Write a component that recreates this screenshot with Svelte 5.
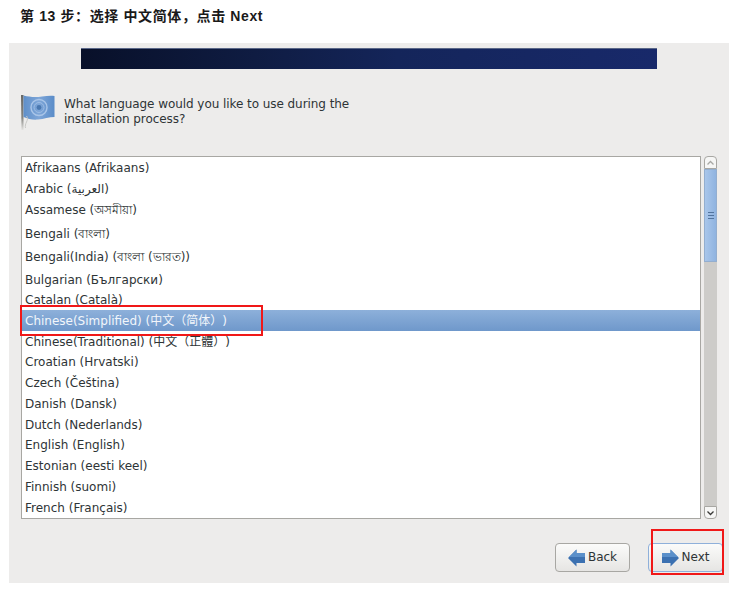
<script lang="ts">
	const languages = [
		{ label: 'Afrikaans (Afrikaans)', height: 21 },
		{ label: 'Arabic (العربية)', height: 21 },
		{ label: 'Assamese (অসমীয়া)', height: 21 },
		{ label: 'Bengali (বাংলা)', height: 26, low: true },
		{ label: 'Bengali(India) (বাংলা (ভারত))', height: 22 },
		{ label: 'Bulgarian (Български)', height: 22, low: true },
		{ label: 'Catalan (Català)', height: 20 },
		{ label: 'Chinese(Simplified) (中文（简体）)', height: 21, selected: true },
		{ label: 'Chinese(Traditional) (中文（正體）)', height: 21 },
		{ label: 'Croatian (Hrvatski)', height: 20 },
		{ label: 'Czech (Čeština)', height: 21 },
		{ label: 'Danish (Dansk)', height: 21 },
		{ label: 'Dutch (Nederlands)', height: 21 },
		{ label: 'English (English)', height: 20 },
		{ label: 'Estonian (eesti keel)', height: 21 },
		{ label: 'Finnish (suomi)', height: 21 },
		{ label: 'French (Français)', height: 21 }
	];
</script>

<div class="page">
	<h1 class="step">第 13 步：选择 中文简体，点击 Next</h1>

	<div class="window">
		<div class="banner"></div>

		<div class="question">
			<svg class="flag" width="36" height="36" viewBox="0 0 36 36" aria-hidden="true">
				<defs>
					<linearGradient id="cloth" x1="0" y1="0" x2="1" y2="0">
						<stop offset="0" stop-color="#5f8fc9" />
						<stop offset="0.5" stop-color="#7ea6d8" />
						<stop offset="1" stop-color="#5a8cc8" />
					</linearGradient>
					<linearGradient id="pole" x1="0" y1="0" x2="0" y2="1">
						<stop offset="0" stop-color="#686865" />
						<stop offset="0.65" stop-color="#858581" />
						<stop offset="1" stop-color="#e4e3e1" />
					</linearGradient>
				</defs>
				<path d="M1 0 L3.500 0 L3.500 35 L1.500 35 Z" fill="url(#pole)" />
				<path d="M3.500 0.500 C10 2 15 2.500 22 1.500 C27 0.800 31 0.500 34.500 1 L34.500 22 C29 22 24 24 18 24.500 C13 25 8 24 3.500 22 Z" fill="url(#cloth)" />
				<circle cx="19" cy="12.500" r="8" fill="none" stroke="#a9c5e8" stroke-width="1.400" />
				<circle cx="19" cy="12.500" r="5" fill="none" stroke="#9dbde4" stroke-width="1" />
				<circle cx="19" cy="12.500" r="2.400" fill="#4a78b0" />
				<path d="M6.500 21 C8 23 7.500 25 6.500 27 C5.500 29 5 31 5.500 33" fill="none" stroke="#c9c9c6" stroke-width="1" />
			</svg>
			<p>What language would you like to use during the<br />installation process?</p>
		</div>

		<div class="chooser">
			<ul class="list">
				{#each languages as lang}
					<li class="row" class:selected={lang.selected} class:low={lang.low} style:height="{lang.height}px">{lang.label}</li>
				{/each}
			</ul>

			<div class="scrollbar">
				<div class="arrow up">
					<svg width="9" height="6" viewBox="0 0 9 6" aria-hidden="true"><path d="M1.500 4.500 L4.500 1.500 L7.500 4.500" fill="none" stroke="#a8a8a4" stroke-width="1.300" /></svg>
				</div>
				<div class="thumb">
					<span></span><span></span><span></span>
				</div>
				<div class="track"></div>
				<div class="arrow down">
					<svg width="9" height="6" viewBox="0 0 9 6" aria-hidden="true"><path d="M1.500 1.500 L4.500 4.500 L7.500 1.500" fill="none" stroke="#3a3a38" stroke-width="1.300" /></svg>
				</div>
			</div>
		</div>

		<div class="actions">
			<button type="button" class="btn">
				<svg width="17" height="18" viewBox="0 0 17 18" aria-hidden="true">
					<path d="M0 9 L8.500 0.500 L8.500 4 L17 4 L17 14 L8.500 14 L8.500 17.500 Z" fill="#3c71b1" />
					<path d="M8.500 0.500 L8.500 4 L17 4 L17 8 L1 8 Z" fill="#5b90ca" />
				</svg>
				<span class="label">Back</span>
			</button>
			<button type="button" class="btn focused">
				<svg width="17" height="18" viewBox="0 0 17 18" aria-hidden="true">
					<path d="M17 9 L8.500 0.500 L8.500 4 L0 4 L0 14 L8.500 14 L8.500 17.500 Z" fill="#3c71b1" />
					<path d="M8.500 0.500 L8.500 4 L0 4 L0 8 L16 8 Z" fill="#5b90ca" />
				</svg>
				<span class="label">Next</span>
			</button>
		</div>
	</div>

	<div class="mark mark-row"></div>
	<div class="mark mark-next"></div>
</div>

<style>
	:global(body) {
		margin: 0;
		background: #fff;
	}

	.page {
		position: relative;
		width: 751px;
		height: 596px;
		overflow: hidden;
		font-family: 'DejaVu Sans', 'Noto Sans', 'Noto Sans CJK SC', sans-serif;
		font-size: 12px;
		color: #2e3436;
		text-spacing-trim: space-all;
	}

	.step {
		margin: 0;
		padding: 8px 0 0 20px;
		height: 43px;
		box-sizing: border-box;
		font-family: 'Liberation Sans', 'Noto Sans CJK SC', sans-serif;
		font-size: 14px;
		line-height: 17px;
		font-weight: 700;
		letter-spacing: 0.62px;
		color: #1a1a1a;
	}

	.window {
		margin-left: 9px;
		width: 720px;
		height: 540px;
		background: #edeceb;
		display: flex;
		flex-direction: column;
	}

	.banner {
		margin: 5px 0 0 72px;
		width: 576px;
		height: 21px;
		background: linear-gradient(90deg, #081029 0%, #0f1c42 30%, #14255a 55%, #18296a 100%);
		border-top: 1px solid #5a6788;
		box-sizing: border-box;
	}

	.question {
		margin: 26px 0 0 11px;
		height: 38px;
		display: flex;
		align-items: flex-start;
		gap: 8px;
	}

	.flag {
		flex: none;
	}

	.question p {
		margin: 2px 0 0;
		font-size: 12px;
		line-height: 15px;
		letter-spacing: -0.06px;
	}

	.chooser {
		margin: 23px 0 0 12px;
		display: flex;
		gap: 3px;
		height: 363px;
	}

	.list {
		list-style: none;
		margin: 0;
		padding: 0;
		width: 680px;
		box-sizing: border-box;
		background: #fff;
		border: 1px solid #a8a7a3;
		overflow: hidden;
	}

	.row {
		padding-left: 3px;
		box-sizing: border-box;
		display: flex;
		align-items: center;
		white-space: nowrap;
		line-height: 1;
	}

	.low {
		padding-top: 2px;
	}

	.selected {
		background: linear-gradient(180deg, #8db0da 0%, #6f98cb 100%);
		color: #f2f6fb;
	}

	.scrollbar {
		width: 13px;
		display: flex;
		flex-direction: column;
	}

	.arrow {
		height: 13px;
		flex: none;
		box-sizing: border-box;
		background: #f6f6f5;
		border: 1px solid #a8a7a3;
		display: flex;
		align-items: center;
		justify-content: center;
	}

	.up {
		border-radius: 4px 4px 0 0;
	}

	.down {
		border-radius: 0 0 4px 4px;
	}

	.thumb {
		height: 93px;
		flex: none;
		box-sizing: border-box;
		background: linear-gradient(90deg, #a9c6ea, #8fb3e0);
		border: 1px solid #93aecf;
		display: flex;
		flex-direction: column;
		align-items: center;
		justify-content: center;
		gap: 2px;
	}

	.thumb span {
		width: 6px;
		height: 1px;
		background: #52749e;
	}

	.track {
		flex: 1;
		background: #cdccc9;
	}

	.actions {
		margin: 24px 6px 0 0;
		display: flex;
		justify-content: flex-end;
		gap: 18px;
	}

	.btn {
		width: 75px;
		height: 29px;
		padding: 0;
		box-sizing: border-box;
		display: flex;
		align-items: center;
		justify-content: center;
		gap: 3px;
		border: 1px solid #a8a7a3;
		border-radius: 4px;
		background: linear-gradient(180deg, #fbfbfa 0%, #e6e5e3 100%);
		font: inherit;
		color: #2e3436;
	}

	.label {
		padding-bottom: 2px;
	}

	.focused {
		border-color: #8fb0da;
	}

	.mark {
		position: absolute;
		box-sizing: border-box;
		border: 2px solid #f01818;
	}

	.mark-row {
		left: 20px;
		top: 305px;
		width: 243px;
		height: 31px;
	}

	.mark-next {
		left: 651px;
		top: 529px;
		width: 73px;
		height: 46px;
	}
</style>
